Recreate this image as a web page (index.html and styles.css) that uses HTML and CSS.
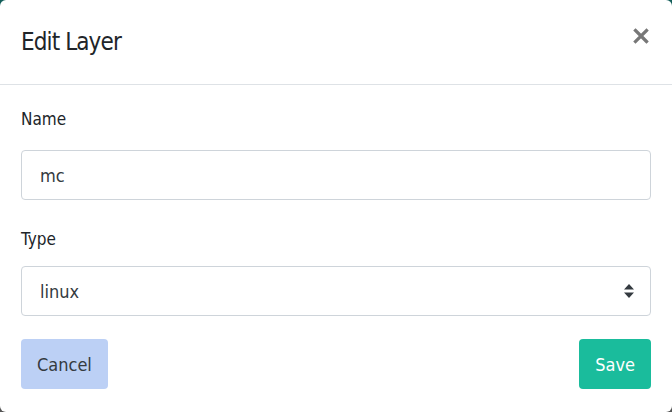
FILE: index.html
```html
<!DOCTYPE html>
<html lang="en">
<head>
    <meta charset="UTF-8">
    <meta name="viewport" content="width=device-width, initial-scale=1.0">
    <title>Edit Layer</title>
    <link rel="stylesheet" href="styles.css">
</head>
<body>
    <div class="modal">
        <header class="modal-header">
            <h1>Edit Layer</h1>
            <button class="close" aria-label="Close">
                <svg width="16" height="16" viewBox="0 0 16 16">
                    <path d="M2.5 2.5 L13.5 13.5 M13.5 2.5 L2.5 13.5" stroke="#777" stroke-width="3.2" stroke-linecap="square"/>
                </svg>
            </button>
        </header>
        <div class="modal-body">
            <label class="field-label" for="name">Name</label>
            <input class="field" type="text" id="name" value="mc">
            <label class="field-label type-label" for="type">Type</label>
            <div class="select-wrap">
                <select class="field" id="type">
                    <option>linux</option>
                </select>
                <svg class="arrows" width="12" height="16" viewBox="0 0 12 16">
                    <path d="M6 1 L11 6.5 L1 6.5 Z M1 9.5 L11 9.5 L6 15 Z" fill="#343a40"/>
                </svg>
            </div>
            <div class="actions">
                <button class="btn btn-cancel">Cancel</button>
                <button class="btn btn-save">Save</button>
            </div>
        </div>
    </div>
</body>
</html>
```

FILE: styles.css
```css
html, body {
    margin: 0;
    padding: 0;
    height: 100%;
}
body {
    font-family: "DejaVu Sans Condensed", "DejaVu Sans", sans-serif;
    font-stretch: condensed;
    background: linear-gradient(#135e5a, #555);
    color: #212529;
}
.modal {
    height: 100%;
    box-sizing: border-box;
    background: white;
    border-radius: 6px;
    display: flex;
    flex-direction: column;
}
.modal-header {
    height: 84px;
    border-bottom: 1px solid #dee2e6;
    display: flex;
    align-items: center;
    justify-content: space-between;
    padding: 0 21px;
}
h1 {
    margin: 0;
    font-size: 24px;
    font-weight: normal;
    letter-spacing: -0.9px;
}
.close {
    background: none;
    border: none;
    padding: 0;
    margin-right: 2px;
    margin-top: -12px;
    cursor: pointer;
    display: flex;
}
.modal-body {
    padding: 21px 21px 0;
    display: flex;
    flex-direction: column;
}
.field-label {
    font-size: 17px;
    line-height: 27px;
    margin-bottom: 17px;
}
.type-label {
    margin-top: 26px;
    margin-bottom: 13px;
}
.field {
    height: 50px;
    box-sizing: border-box;
    width: 100%;
    border: 1px solid #ced4da;
    border-radius: 4px;
    padding: 0 18px;
    font-family: inherit;
    font-stretch: condensed;
    font-size: 18px;
    color: #343a40;
    background: white;
    appearance: none;
    -webkit-appearance: none;
}
.select-wrap {
    position: relative;
}
.arrows {
    position: absolute;
    right: 16px;
    top: 17px;
}
.actions {
    display: flex;
    justify-content: space-between;
    margin-top: 23px;
}
.btn {
    height: 50px;
    border: none;
    border-radius: 4px;
    font-family: inherit;
    font-stretch: condensed;
    font-size: 18px;
    padding: 0 16px;
    cursor: pointer;
}
.btn-cancel {
    background-color: #bcd0f5;
    color: #343a40;
}
.btn-save {
    background-color: #1abc9c;
    color: white;
    padding: 0 16px;
}
```
